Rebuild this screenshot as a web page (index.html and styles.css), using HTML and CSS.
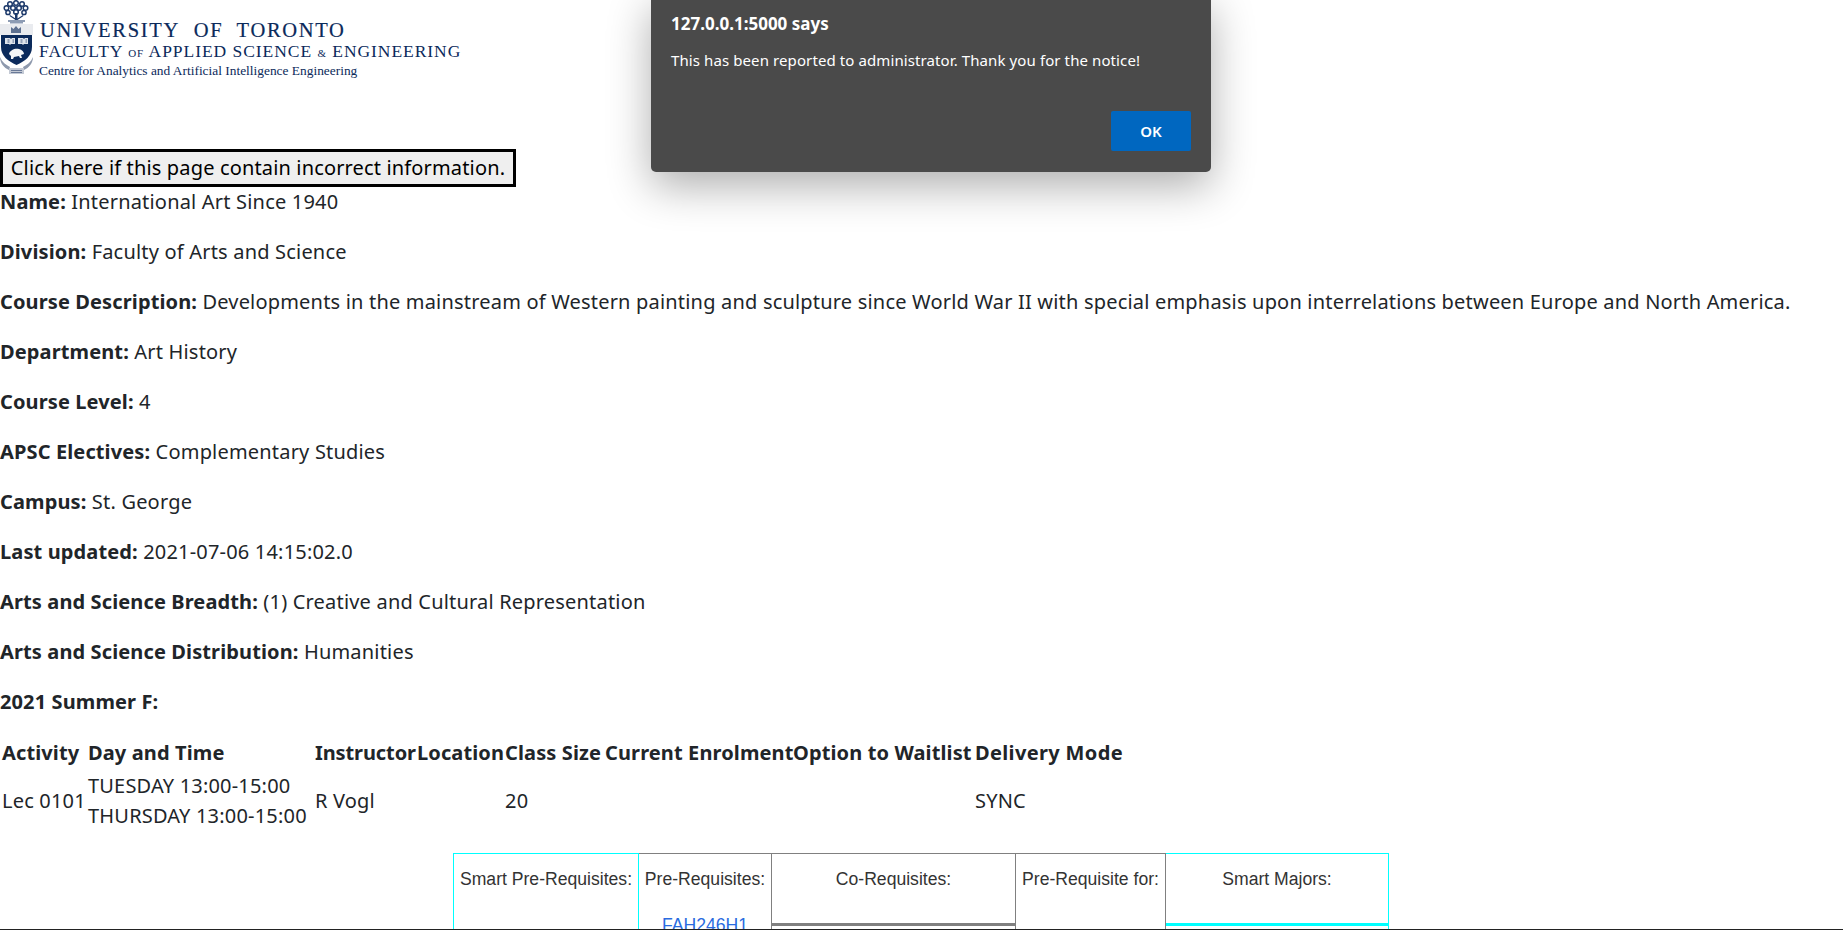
FILE: index.html
```html
<!DOCTYPE html>
<html lang="en">
<head>
    <meta charset="UTF-8">
    <meta name="viewport" content="width=device-width, initial-scale=1.0">
    <title>International Art Since 1940</title>
    <link rel="stylesheet" href="styles.css">
</head>
<body>
<div class="page">
    <header class="logo">
        <svg class="crest" viewBox="0 0 34 76" width="34" height="76">
            <g fill="#fff" stroke="#1d3a6b" stroke-width="1.500">
                <circle cx="16" cy="3" r="2.300"/>
                <circle cx="10" cy="4" r="2.300"/>
                <circle cx="22" cy="4" r="2.300"/>
                <circle cx="6.500" cy="8" r="2.300"/>
                <circle cx="25.500" cy="8" r="2.300"/>
                <circle cx="13" cy="8" r="2.300"/>
                <circle cx="19" cy="8" r="2.300"/>
                <circle cx="8" cy="12.500" r="2.100"/>
                <circle cx="24" cy="12.500" r="2.100"/>
                <circle cx="16" cy="12" r="2.300"/>
            </g>
            <path d="M15 13h2.500v7H15zM10 15l5.500 3.500v1.500L9.500 16zM23 15l-5.500 3.500v1.500l6-4zM8 20.500h17v1H8zM10 22.500h13v.8H10z" fill="#1d3a6b"/>
            <path d="M0 24h33v11H0z" fill="#e9ebef"/>
            <path d="M11 27l2.500 2 2.500-3 2.500 3 2.500-2v6H11z" fill="#5d7090"/>
            <path d="M1 35h31v12c0 9-7 14-15.500 18C8 61 1 56 1 47z" fill="#0b2a5b"/>
            <path d="M5 38h5l1 1 1-1h3v6h-4l-1 1-1-1H5zM18 38h5l1 1 1-1h3v6h-4l-1 1-1-1h-4z" fill="#dfe4ec"/>
            <path d="M7.500 40h2M7.500 42h2M12.500 40h1.500M12.500 42h1.500M20.500 40h2M20.500 42h2M25.500 40h1.500M25.500 42h1.500" stroke="#0b2a5b" stroke-width=".7"/>
            <path d="M9 54c1-4 6-6 10-5 3 .6 5 3 5 5l-3 1 1 3h-2l-1-2-5 1-1 2h-2v-3z" fill="#f4f5f7"/>
            <path d="M0 57c2 5 6 8 10 10l-1 3C4 68 0 63 0 57zM33 57c-2 5-6 8-10 10l1 3c5-2 9-7 9-13z" fill="#8e99ad"/>
            <path d="M9 68h15v6H9z" fill="#c3c9d4"/>
            <path d="M11 70h11v.8H11zM11 72h11v.8H11z" fill="#4c5f82"/>
        </svg>
        <div class="logo-text">
            <div class="logo-uni">UNIVERSITY&nbsp; OF&nbsp; TORONTO</div>
            <div class="logo-fac">FACULTY <small>OF</small> APPLIED SCIENCE <small>&amp;</small> ENGINEERING</div>
            <div class="logo-centre">Centre for Analytics and Artificial Intelligence Engineering</div>
        </div>
    </header>

    <button type="button" class="report-btn">Click here if this page contain incorrect information.</button>

    <p><b>Name:</b> International Art Since 1940</p>
    <p><b>Division:</b> Faculty of Arts and Science</p>
    <p><b>Course Description:</b> Developments in the mainstream of Western painting and sculpture since World War II with special emphasis upon interrelations between Europe and North America.</p>
    <p><b>Department:</b> Art History</p>
    <p><b>Course Level:</b> 4</p>
    <p><b>APSC Electives:</b> Complementary Studies</p>
    <p><b>Campus:</b> St. George</p>
    <p><b>Last updated:</b> 2021-07-06 14:15:02.0</p>
    <p><b>Arts and Science Breadth:</b> (1) Creative and Cultural Representation</p>
    <p><b>Arts and Science Distribution:</b> Humanities</p>
    <p><b>2021 Summer F:</b></p>

    <table class="sections">
        <tr>
            <th class="w-activity">Activity</th>
            <th class="w-time">Day and Time</th>
            <th class="w-instructor">Instructor</th>
            <th class="w-location">Location</th>
            <th class="w-size">Class Size</th>
            <th class="w-enrol">Current Enrolment</th>
            <th class="w-wait">Option to Waitlist</th>
            <th class="w-mode">Delivery Mode</th>
        </tr>
        <tr>
            <td>Lec 0101</td>
            <td>TUESDAY 13:00-15:00<br>THURSDAY 13:00-15:00</td>
            <td>R Vogl</td>
            <td></td>
            <td>20</td>
            <td></td>
            <td></td>
            <td>SYNC</td>
        </tr>
    </table>

    <table class="reqs">
        <tr>
            <td class="cyan col-smart"><div class="req-head">Smart Pre-Requisites:</div></td>
            <td class="grey col-pre">
                <div class="req-head">Pre-Requisites:</div>
                <a href="#" class="req-link">FAH246H1</a>
            </td>
            <td class="grey col-co"><div class="req-head ruled">Co-Requisites:</div></td>
            <td class="grey col-for"><div class="req-head">Pre-Requisite for:</div></td>
            <td class="cyan col-majors"><div class="req-head ruled">Smart Majors:</div></td>
        </tr>
    </table>
</div>

<div class="dialog">
    <div class="dialog-title">127.0.0.1:5000 says</div>
    <div class="dialog-msg">This has been reported to administrator. Thank you for the notice!</div>
    <div class="dialog-actions"><button type="button" class="dialog-ok">OK</button></div>
</div>
</body>
</html>
```

FILE: styles.css
```css
html, body {
    margin: 0;
    padding: 0;
    height: 100%;
    overflow: hidden;
}
body {
    font-family: "Noto Sans", sans-serif;
    font-size: 20px;
    line-height: 30px;
    letter-spacing: .19px;
    color: #212529;
    background: #fff;
}
.page {
    height: 929px;
    overflow: hidden;
    border-bottom: 1px solid #222;
}
.logo {
    display: flex;
    height: 149px;
    align-items: flex-start;
    letter-spacing: 0;
}
.crest {
    flex: none;
}
.logo-text {
    margin-left: 5px;
    padding-top: 20px;
    font-family: "Liberation Serif", serif;
    color: #0b2a5b;
    line-height: 1;
    white-space: nowrap;
}
.logo-uni {
    padding-left: 1px;
    font-size: 20.500px;
    letter-spacing: 1.700px;
    height: 23px;
    -webkit-text-stroke: .2px #0b2a5b;
}
.logo-fac {
    font-size: 17.500px;
    letter-spacing: .95px;
    height: 21px;
}
.logo-fac small {
    font-size: 11px;
    letter-spacing: 1px;
}
.logo-centre {
    font-size: 13.400px;
}
.report-btn {
    display: block;
    width: 516px;
    height: 38px;
    padding: 0;
    font: 20px/30px "Noto Sans", sans-serif;
    letter-spacing: .15px;
    color: #000;
    background: #efefef;
    border: 3px solid #000;
}
p {
    margin: 0 0 20px;
    white-space: nowrap;
}
b, th {
    letter-spacing: .12px;
}
.sections {
    border-collapse: separate;
    border-spacing: 2px;
    table-layout: fixed;
    width: 1127px;
}
.sections th, .sections td {
    padding: 0;
    text-align: left;
    white-space: nowrap;
}
.sections th {
    line-height: 28px;
    padding-bottom: 2px;
}
.w-activity { width: 84px; }
.w-time { width: 225px; }
.w-instructor { width: 100px; letter-spacing: -.1px; }
.w-location { width: 86px; }
.w-size { width: 98px; }
.w-enrol { width: 186px; }
.w-wait { width: 180px; }
.w-mode { width: 150px; letter-spacing: .35px; }
.reqs {
    margin: 20px 0 0 453px;
    border-collapse: collapse;
    table-layout: fixed;
    width: 935px;
    font-family: "Liberation Sans", sans-serif;
    font-size: 17.600px;
    letter-spacing: 0;
    color: #333;
}
.reqs td {
    padding: 0;
    box-sizing: border-box;
    vertical-align: top;
    text-align: center;
}
.cyan {
    border: 1px solid #00ffff;
}
.grey {
    border: 1px solid #808080;
}
.col-smart { width: 185px; }
.col-pre { width: 133px; }
.col-co { width: 244px; }
.col-for { width: 150px; }
.col-majors { width: 223px; }
.req-head {
    height: 56px;
    padding-top: 10px;
    box-sizing: border-box;
}
.req-head.ruled {
    height: 72px;
    border-bottom: 3px solid #808080;
}
.col-majors .req-head.ruled {
    border-bottom-color: #00ffff;
}
.req-link {
    display: block;
    color: #2a6be0;
    text-decoration: none;
}
.dialog {
    position: absolute;
    left: 651px;
    top: -6px;
    width: 560px;
    height: 178px;
    box-sizing: border-box;
    padding: 20px 20px 0;
    background: #4a4a4a;
    border-radius: 5px;
    box-shadow: 0 14px 44px rgba(0, 0, 0, .32);
    color: #fff;
    font-size: 15px;
    line-height: 20px;
    letter-spacing: .1px;
}
.dialog-title {
    font-size: 17px;
    font-weight: bold;
    letter-spacing: 0;
}
.dialog-msg {
    margin-top: 16px;
}
.dialog-actions {
    display: flex;
    justify-content: flex-end;
    margin-top: 41px;
}
.dialog-ok {
    width: 80px;
    height: 40px;
    border: 0;
    border-radius: 2px;
    background: #0067c0;
    color: #fff;
    font: 600 15px "Noto Sans", sans-serif;
}
```
